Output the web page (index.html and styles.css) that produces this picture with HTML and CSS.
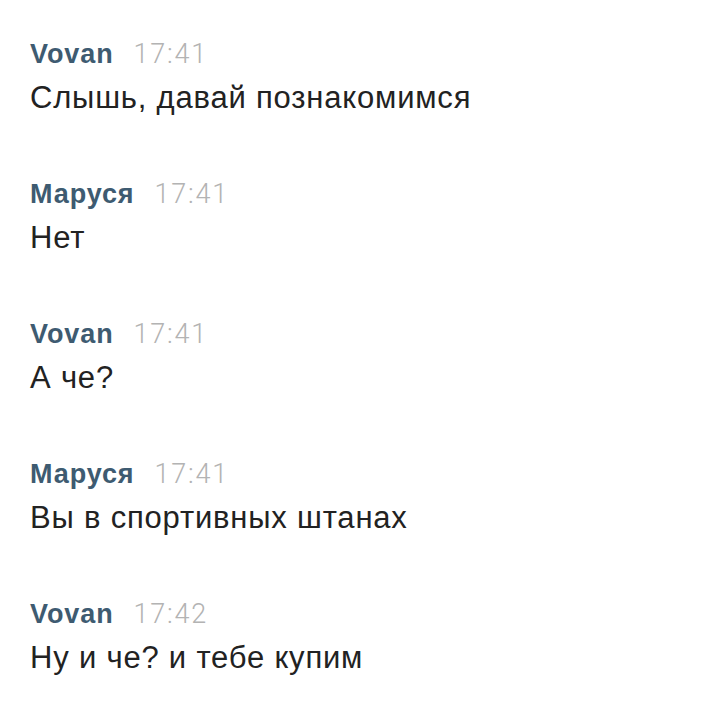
FILE: index.html
```html
<!DOCTYPE html>
<html lang="ru">
<head>
<meta charset="utf-8">
<link rel="stylesheet" href="styles.css">
</head>
<body>
<div class="chat">
  <div class="msg">
    <div class="head"><span class="name">Vovan</span><span class="time">17:41</span></div>
    <div class="text">Слышь, давай познакомимся</div>
  </div>
  <div class="msg">
    <div class="head"><span class="name">Маруся</span><span class="time">17:41</span></div>
    <div class="text">Нет</div>
  </div>
  <div class="msg">
    <div class="head"><span class="name">Vovan</span><span class="time">17:41</span></div>
    <div class="text">А че?</div>
  </div>
  <div class="msg">
    <div class="head"><span class="name">Маруся</span><span class="time">17:41</span></div>
    <div class="text">Вы в спортивных штанах</div>
  </div>
  <div class="msg">
    <div class="head"><span class="name">Vovan</span><span class="time">17:42</span></div>
    <div class="text">Ну и че? и тебе купим</div>
  </div>
</div>
</body>
</html>
```
FILE: styles.css
```css
html, body {
  margin: 0;
  padding: 0;
  background: #ffffff;
}
body {
  width: 710px;
  height: 710px;
  overflow: hidden;
  font-family: "Liberation Sans", Arial, sans-serif;
}
.chat {
  display: flex;
  flex-direction: column;
  gap: 63px;
  padding: 39px 0 0 30px;
}
.msg {
  display: flex;
  flex-direction: column;
  gap: 11px;
}
.head {
  display: flex;
  align-items: baseline;
  gap: 20px;
  line-height: 30px;
}
.name {
  font-weight: bold;
  font-size: 27px;
  letter-spacing: 0.9px;
  color: #3e5b71;
}
.time {
  font-family: Roboto, sans-serif;
  font-weight: 300;
  font-size: 27px;
  letter-spacing: 1.8px;
  color: #b3b3b3;
}
.text {
  font-size: 31px;
  line-height: 36px;
  letter-spacing: 0.8px;
  color: #222222;
}
```
